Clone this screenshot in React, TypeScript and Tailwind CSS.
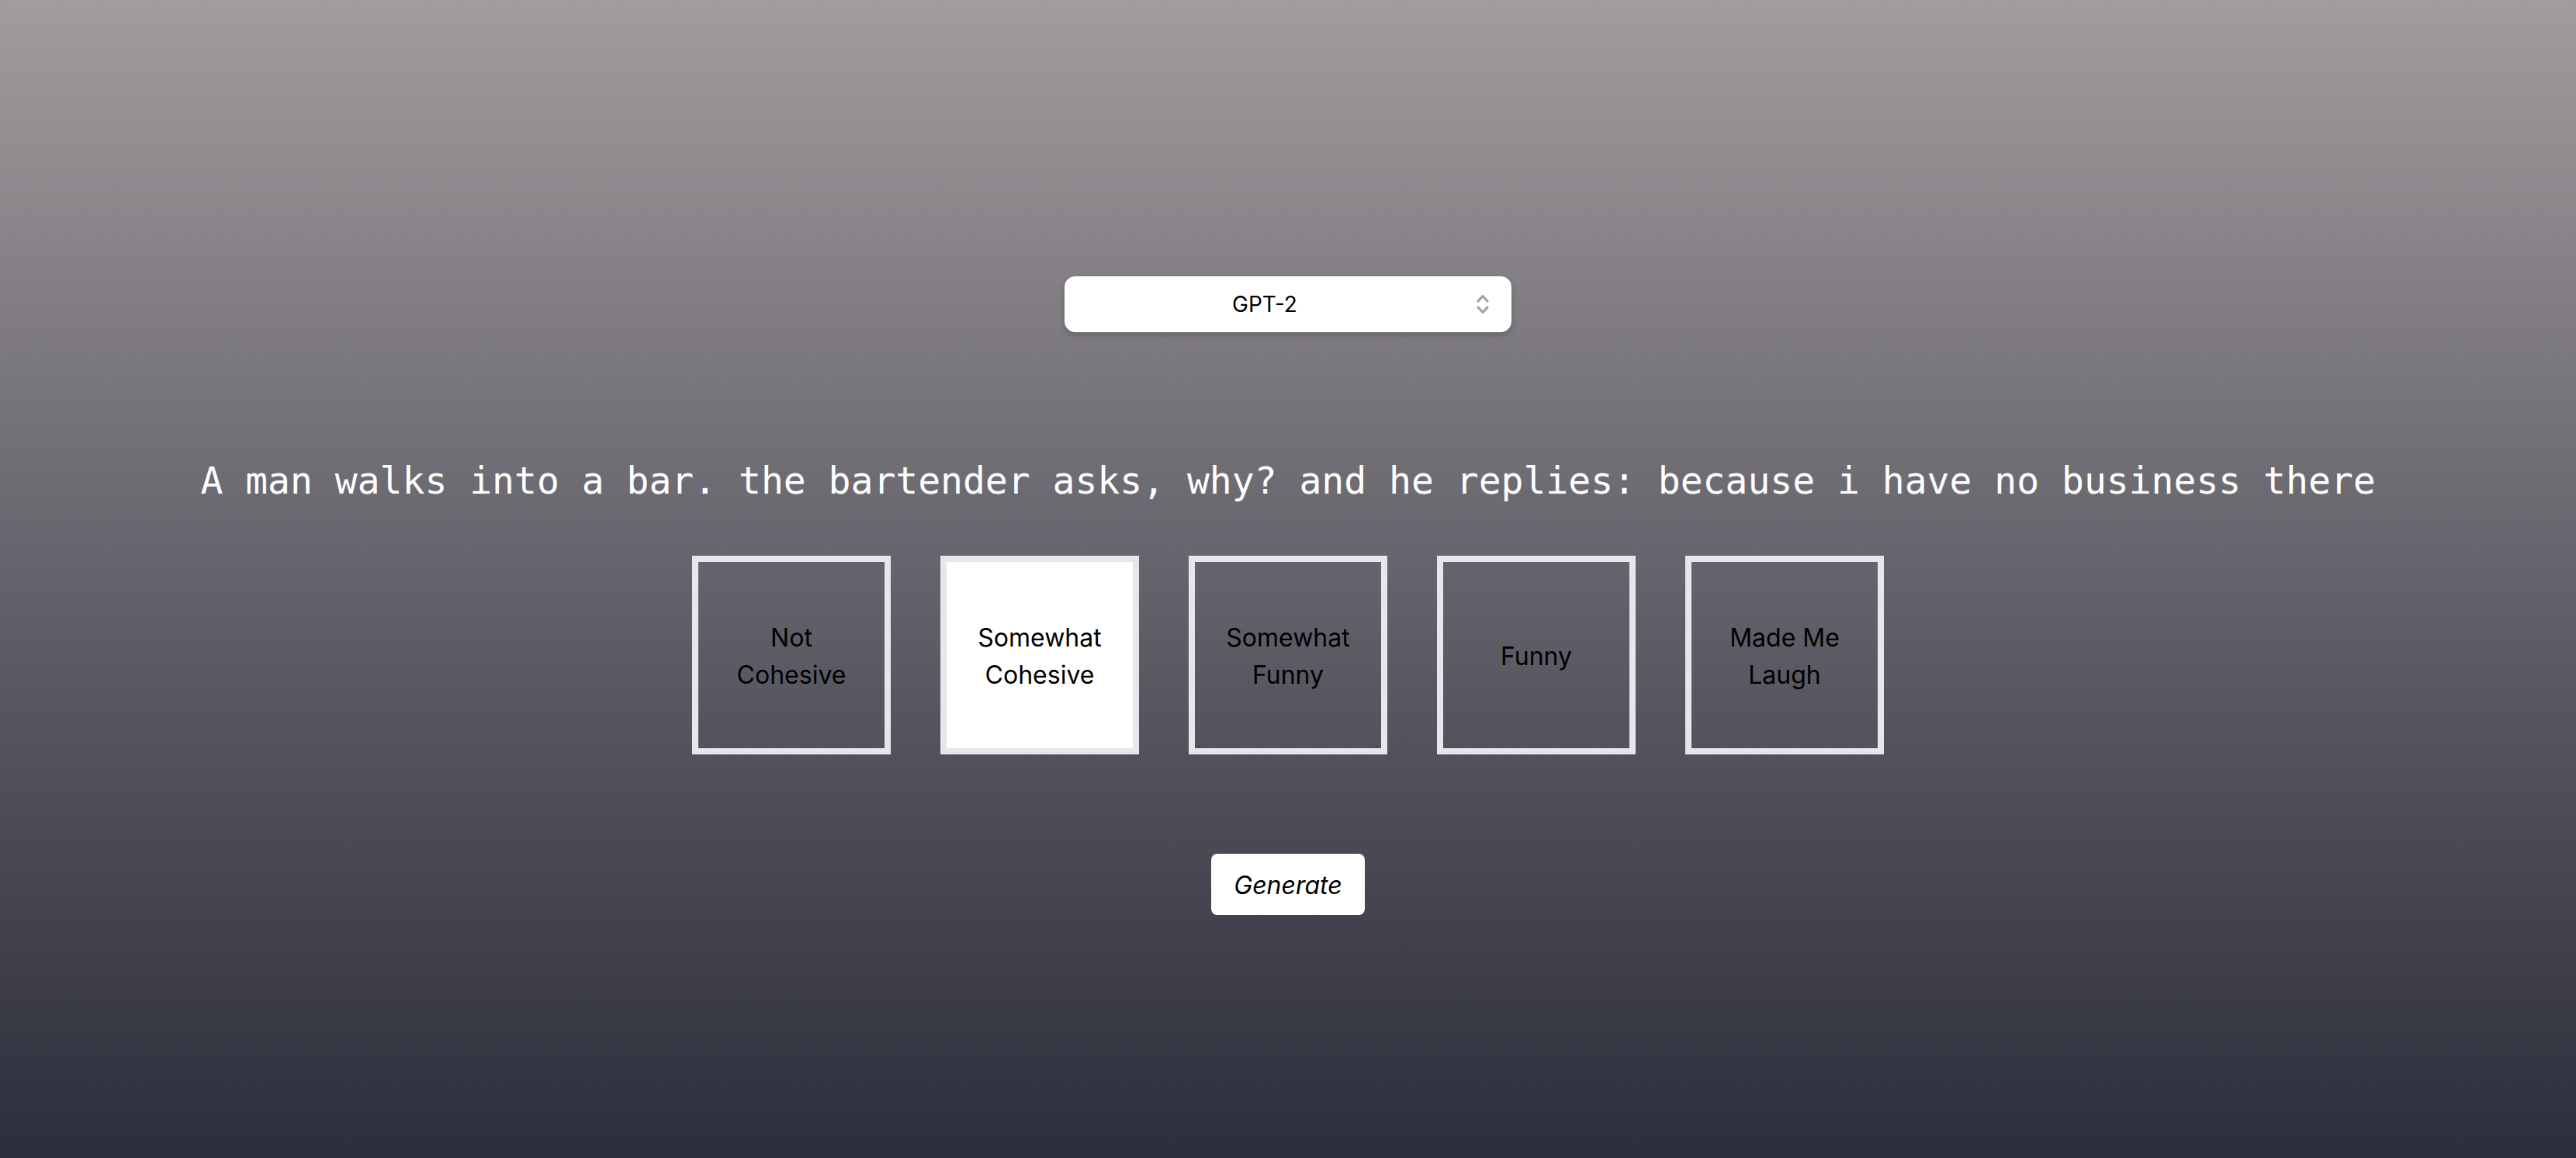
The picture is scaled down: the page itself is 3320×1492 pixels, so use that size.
import React, { useState } from "react";

const options = ["Not Cohesive", "Somewhat Cohesive", "Somewhat Funny", "Funny", "Made Me Laugh"];

export default function App() {
  const [selected, setSelected] = useState(1);
  return (
    <div
      className="w-full h-[1492px] flex flex-col items-center bg-gradient-to-b from-[#a29c9e] to-[#2c2e3b]"
      style={{ fontFamily: "Inter, 'Liberation Sans', sans-serif" }}
    >
      <div className="mt-[356px] relative w-[576px] h-[72px] rounded-[14px] bg-white shadow-[0_4px_8px_rgba(0,0,0,0.18)] flex items-center justify-center pl-[24px] pr-[84px]">
        <span className="text-[28px] text-black leading-none">GPT-2</span>
        <svg
          className="absolute right-[28px] top-1/2 -translate-y-1/2"
          width="18"
          height="30"
          viewBox="0 0 18 30"
          fill="none"
          stroke="#9ca3af"
          strokeWidth="3.2"
          strokeLinecap="round"
          strokeLinejoin="round"
        >
          <path d="M3 11 L9 4.5 L15 11" />
          <path d="M3 19 L9 25.5 L15 19" />
        </svg>
      </div>

      <p
        className="mt-[159px] text-[48px] leading-[64px] text-white whitespace-nowrap"
        style={{ fontFamily: "'DejaVu Sans Mono', 'Liberation Mono', monospace" }}
      >
        A man walks into a bar. the bartender asks, why? and he replies: because i have no business there
      </p>

      <div className="mt-[65px] flex gap-[64px]">
        {options.map((o, i) => (
          <button
            key={o}
            onClick={() => setSelected(i)}
            className={
              "w-[256px] h-[256px] border-[8px] border-[#e5e7eb] flex items-center justify-center px-[32px] pt-[4px] text-[32px] leading-[48px] text-black text-center " +
              (i === selected ? "bg-white" : "bg-transparent")
            }
          >
            {o}
          </button>
        ))}
      </div>

      <button className="mt-[128px] w-[198px] h-[79px] rounded-[8px] bg-white text-[32px] italic text-black flex items-center justify-center pt-[2px]">
        Generate
      </button>
    </div>
  );
}
